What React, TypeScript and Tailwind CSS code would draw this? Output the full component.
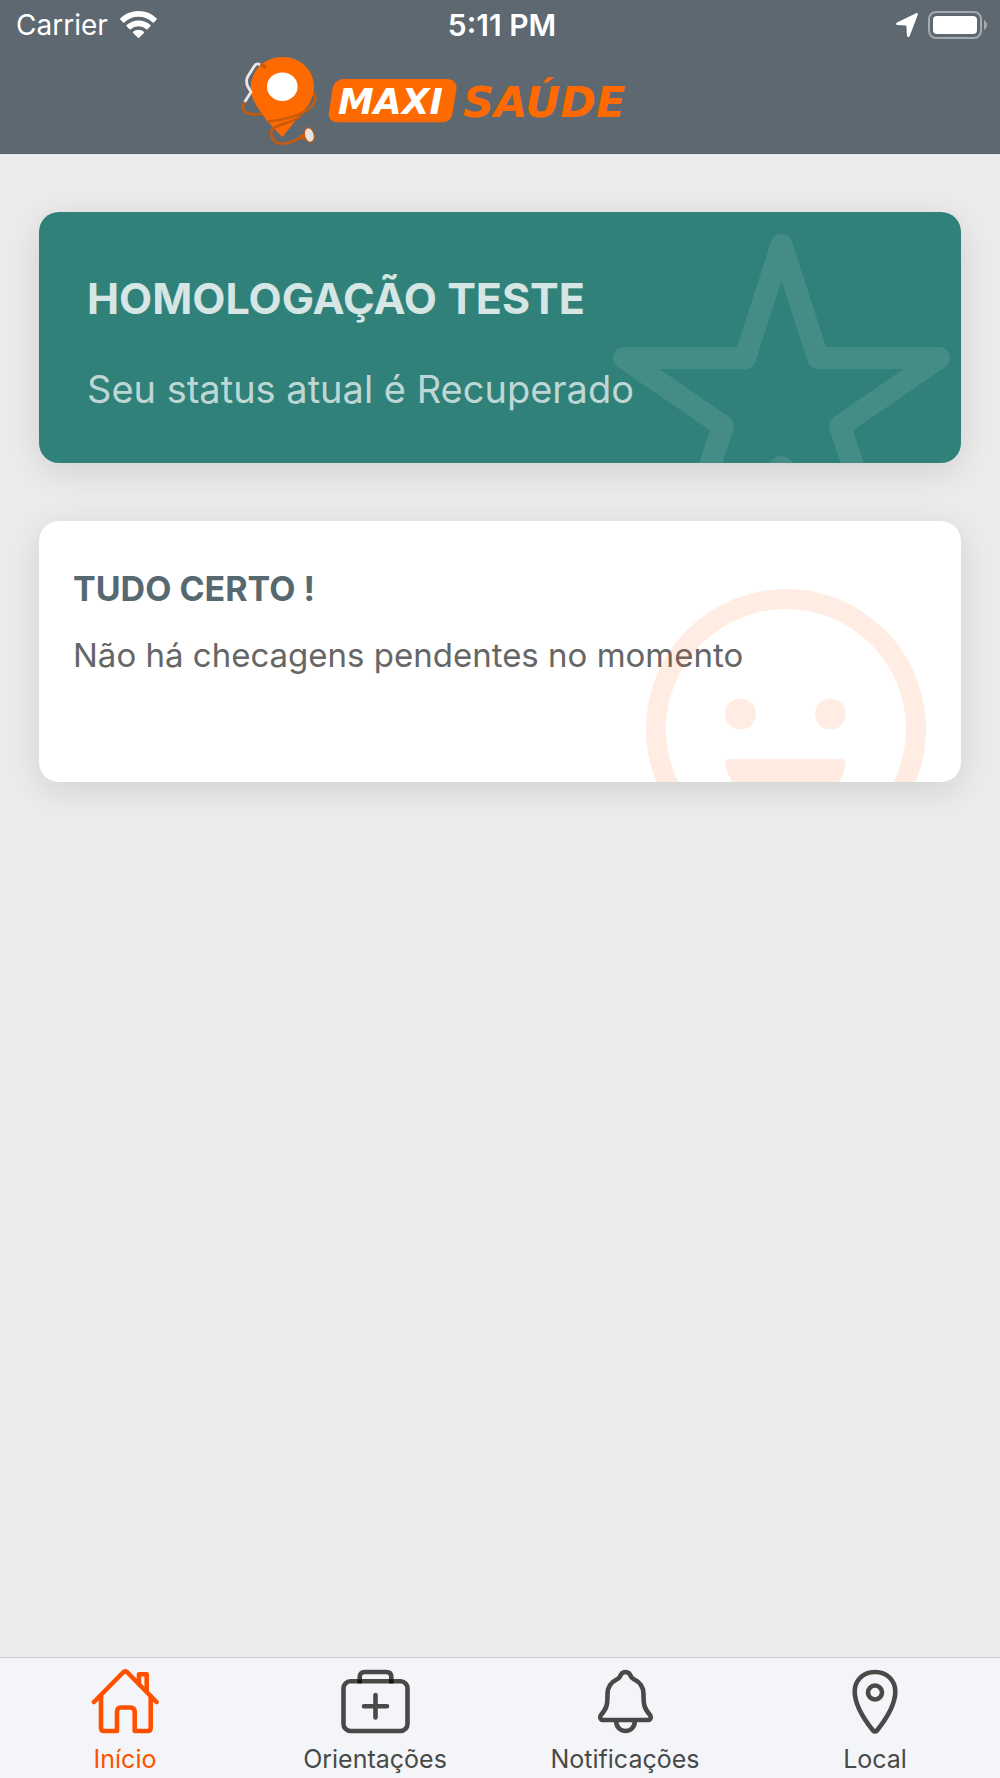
import type { ReactNode } from 'react';

interface StatusCardProps {
  name: string;
  status: string;
}

interface CheckCardProps {
  title: string;
  message: string;
}

interface TabItem {
  label: string;
  href: string;
  icon: ReactNode;
  active?: boolean;
}

function WifiIcon() {
  return (
    <svg width="37" height="28" viewBox="0 0 37 28" fill="#fff" aria-hidden="true">
      <path d="M18.5 0C11.4 0 5 2.8.3 7.4a.9.9 0 0 0 0 1.2l2.8 2.8c.3.3.8.3 1.2 0a20.4 20.4 0 0 1 28.4 0c.4.3.9.3 1.2 0l2.8-2.8a.9.9 0 0 0 0-1.2A26 26 0 0 0 18.5 0Z" />
      <path d="M18.5 9.5c-4.5 0-8.7 1.7-11.9 4.6a.8.8 0 0 0 0 1.2l2.9 2.9c.3.3.8.3 1.1 0a11.7 11.7 0 0 1 15.8 0c.3.3.8.3 1.1 0l2.9-2.9a.8.8 0 0 0 0-1.2 17.6 17.6 0 0 0-11.9-4.6Z" />
      <path d="M18.5 18.8c-2.1 0-4 .8-5.4 2a.8.8 0 0 0 0 1.2l4.8 4.8c.3.3.9.3 1.2 0l4.8-4.8a.8.8 0 0 0 0-1.2 8.2 8.2 0 0 0-5.4-2Z" />
    </svg>
  );
}

function LocationIcon() {
  return (
    <svg width="22" height="24" viewBox="0 0 22 24" fill="#fff" aria-hidden="true">
      <path d="M20 .2 1 9.4c-1.4.8-1.2 2.6.4 2.7l8.5.5c.3 0 .5.3.5.6l.5 9.3c.1 1.7 2.1 1.9 2.8.5l8.2-21.400c.3-1-.8-1.800-1.900-1.400Z" />
    </svg>
  );
}

function BatteryIcon() {
  return (
    <svg width="60" height="28" viewBox="0 0 60 28" aria-hidden="true">
      <rect x="1" y="1" width="52" height="26" rx="7" fill="none" stroke="#a4aaaf" strokeWidth="2" />
      <rect x="5" y="5" width="44" height="18" rx="4" fill="#fff" />
      <path d="M56 9c4 2 4 8 0 10Z" fill="#a4aaaf" />
    </svg>
  );
}

function Logo() {
  return (
    <svg width="390" height="90" viewBox="0 0 390 90" role="img" aria-label="Maxi Saúde">
      <path
        d="M42.3 2C24 2 10.7 16 10.7 33c0 11 7.3 20 16.3 33l15.3 16L60 60c8-8 14-17 14-28C74 15 60.5 2 42.3 2Z"
        fill="#ff6a00"
      />
      <ellipse cx="42.3" cy="31.7" rx="15.3" ry="14.3" fill="#fff" />
      <g fill="none" strokeLinecap="round" strokeLinejoin="round">
        <path d="M20 9.5c-2-1-4-.8-5.3 1L7.5 22c-1 2-1 6 0 9l3.500 6-6 9.500" stroke="#e8e8e8" strokeWidth="2.8" />
        <path d="m22 10 2.5 1.8" stroke="#c85a0c" strokeWidth="4" />
        <path d="M4.5 48c-2.5 3-2.5 7 1.5 9.5 4 2.300 9.500 2.300 15 1.500" stroke="#c85a0c" strokeWidth="2.6" />
        <path d="M74 38.5c3 4 1.5 9-3.5 14C61 60.500 43 65.500 28 66.500" stroke="#c85a0c" strokeWidth="2.6" />
        <path
          d="M60 61c-6 7-22 7.5-27.5 13-3 4.5-.5 12 5.5 14.2 8 2 16-2 25-6.7"
          stroke="#c85a0c"
          strokeWidth="2.6"
        />
        <path d="m60 81.5 4.5-1.500v3.500Z" fill="#c85a0c" stroke="#c85a0c" strokeWidth="2.6" />
      </g>
      <ellipse
        cx="69.3"
        cy="80"
        rx="4.8"
        ry="7.3"
        transform="rotate(-14 69.3 80)"
        fill="#e5e5e5"
        stroke="#c85a0c"
        strokeWidth="1.2"
      />
      <path
        d="M104 24h103c6 0 10 4 9.5 9.5l-4 25c-1 5.5-5 8.7-10 8.7H97c-5 0-8.8-3.700-8.200-9l3.700-24c1-6 5.500-10.200 11.500-10.200Z"
        fill="#ff6a00"
      />
      <g fontFamily="'DejaVu Sans', sans-serif" fontWeight="700" fontStyle="italic">
        <text x="98" y="59" fontSize="36" fill="#fff">
          MAXI
        </text>
        <text x="223" y="62" fontSize="43" fill="#ff6a00">
          SAÚDE
        </text>
      </g>
    </svg>
  );
}

function StarShape() {
  return (
    <svg className="absolute right-2.5 top-[22px]" width="339" height="330" viewBox="0 0 339 330" aria-hidden="true">
      <path
        d="M169.5 11 206 124h121L228 192l39 118-97.5-77L72 310l39-118L12 124h121Z"
        fill="none"
        stroke="#fff"
        strokeOpacity="0.1"
        strokeWidth="22"
        strokeLinejoin="round"
      />
    </svg>
  );
}

function HappyShape() {
  return (
    <svg className="absolute right-[35px] top-[68px]" width="280" height="280" viewBox="0 0 280 280" aria-hidden="true">
      <g opacity="0.11" fill="#ff5500">
        <circle cx="140" cy="140" r="130" fill="none" stroke="#ff5500" strokeWidth="20" />
        <circle cx="94.5" cy="125" r="15.5" />
        <circle cx="184.5" cy="125" r="15.5" />
        <path d="M84 170h111c3.5 0 5.5 3 4.5 6.5-7 29-31 48.5-60 48.5s-53-19.5-60-48.5c-1-3.500 1-6.500 4.500-6.500Z" />
      </g>
    </svg>
  );
}

const iconProps = {
  height: 65,
  fill: 'none',
  stroke: 'currentColor',
  strokeWidth: 4.6,
  strokeLinecap: 'round',
  strokeLinejoin: 'round',
  'aria-hidden': true,
} as const;

function HomeIcon() {
  return (
    <svg {...iconProps} width="68" viewBox="0 0 68 65">
      <path d="M3 33 32 3.5c1.5-1.4 3-1.4 4.500 0L65.500 33" />
      <path d="M10 27v32c0 2 1 3 3 3h13V43c0-3 1.5-4.5 4-4.5h9.5c2.7 0 4.2 1.5 4.2 4.5v19h13c2 0 3-1 3-3V27" />
      <path d="M48 13V5.3h7.7v15.5" />
    </svg>
  );
}

function MedkitIcon() {
  return (
    <svg {...iconProps} width="69" viewBox="0 0 69 65">
      <rect x="2.5" y="12.3" width="64" height="49.7" rx="7" />
      <path d="M18.7 12.3V8c0-3.3 1.7-5 5-5h21.6c3.3 0 5 1.7 5 5v4.3" />
      <path d="M18.7 10.3v4M50.3 10.3v4" stroke="#151515" strokeLinecap="butt" />
      <path d="M34.5 26v22.5M23 37.2h23" />
    </svg>
  );
}

function BellIcon() {
  return (
    <svg {...iconProps} width="55" viewBox="0 0 55 65">
      <path d="M27.5 3c-3 0-4.5 1.5-5.5 4.5-.5 1.5-1.5 2-3 2.8C12.5 13.5 9.5 18 9.5 25c0 11-.5 14-6.5 21-1.500 2.500-.5 5 2.500 5h44c3 0 4-2.500 2.500-5-6-7-6.500-10-6.500-21 0-7-3-11.500-9.500-14.700-1.500-.8-2.500-1.300-3-2.800C32 4.500 30.500 3 27.500 3Z" />
      <path d="M18.2 52c0 6 4 10 9.3 10s9.3-4 9.3-10" />
    </svg>
  );
}

function PinIcon() {
  return (
    <svg {...iconProps} width="46" viewBox="0 0 46 65">
      <path d="M23 3C11 3 2.7 11.5 2.7 22.5c0 12 8.3 26.5 18.3 39 1.3 1.3 2.7 1.3 4 0 10-12.5 18.3-27 18.3-39C43.3 11.5 35 3 23 3Z" />
      <circle cx="23" cy="23.5" r="7" />
    </svg>
  );
}

const tabs: TabItem[] = [
  { label: 'Início', href: '#inicio', icon: <HomeIcon />, active: true },
  { label: 'Orientações', href: '#orientacoes', icon: <MedkitIcon /> },
  { label: 'Notificações', href: '#notificacoes', icon: <BellIcon /> },
  { label: 'Local', href: '#local', icon: <PinIcon /> },
];

function Header() {
  return (
    <header className="bg-[#5e6870] border-b border-[#565f66] pb-2">
      <div className="grid grid-cols-3 items-center h-[50px] pl-4 pr-3 text-white leading-8">
        <div className="flex items-center gap-3">
          <span className="text-[28px]">Carrier</span>
          <WifiIcon />
        </div>
        <span className="text-center text-[30px] font-semibold">5:11 PM</span>
        <div className="flex items-center justify-end gap-2.5">
          <LocationIcon />
          <BatteryIcon />
        </div>
      </div>
      <div className="pl-[24%] pt-[5px]">
        <Logo />
      </div>
    </header>
  );
}

function StatusCard({ name, status }: StatusCardProps) {
  return (
    <section className="relative overflow-hidden rounded-[20px] bg-[#2f8179] px-12 pt-[60px] pb-[50px] shadow-[0_8px_36px_rgba(0,0,0,0.12)]">
      <h1 className="text-[43px] leading-[52px] font-bold text-white/80">{name}</h1>
      <p className="mt-[41px] text-[38px] leading-[48px] text-white/70">{status}</p>
      <StarShape />
    </section>
  );
}

function CheckCard({ title, message }: CheckCardProps) {
  return (
    <section className="relative overflow-hidden rounded-[20px] bg-white px-[34px] pt-12 pb-[107px] shadow-[0_8px_36px_rgba(0,0,0,0.12)]">
      <h2 className="text-[34px] leading-10 font-bold text-[#566870]">{title}</h2>
      <p className="mt-[26px] text-[33px] leading-10 text-[#666]">{message}</p>
      <HappyShape />
    </section>
  );
}

function TabBar() {
  return (
    <nav className="grid grid-cols-4 border-t border-[#c9cdd2] bg-[#f4f5f9] pt-[11px]">
      {tabs.map(tab => (
        <a
          key={tab.label}
          href={tab.href}
          aria-current={tab.active ? 'page' : undefined}
          className={`flex flex-col items-center gap-2.5 pb-1 text-[25px] leading-[30px] ${
            tab.active ? 'text-[#ff5000]' : 'text-[#484a48]'
          }`}
        >
          {tab.icon}
          <span>{tab.label}</span>
        </a>
      ))}
    </nav>
  );
}

export default function App() {
  return (
    <div className="flex min-h-screen flex-col bg-[#ececec] font-[Inter,sans-serif]">
      <Header />
      <main className="flex flex-1 flex-col gap-[58px] px-[39px] pt-[58px]">
        <StatusCard name="HOMOLOGAÇÃO TESTE" status="Seu status atual é Recuperado" />
        <CheckCard title="TUDO CERTO !" message="Não há checagens pendentes no momento" />
      </main>
      <TabBar />
    </div>
  );
}
